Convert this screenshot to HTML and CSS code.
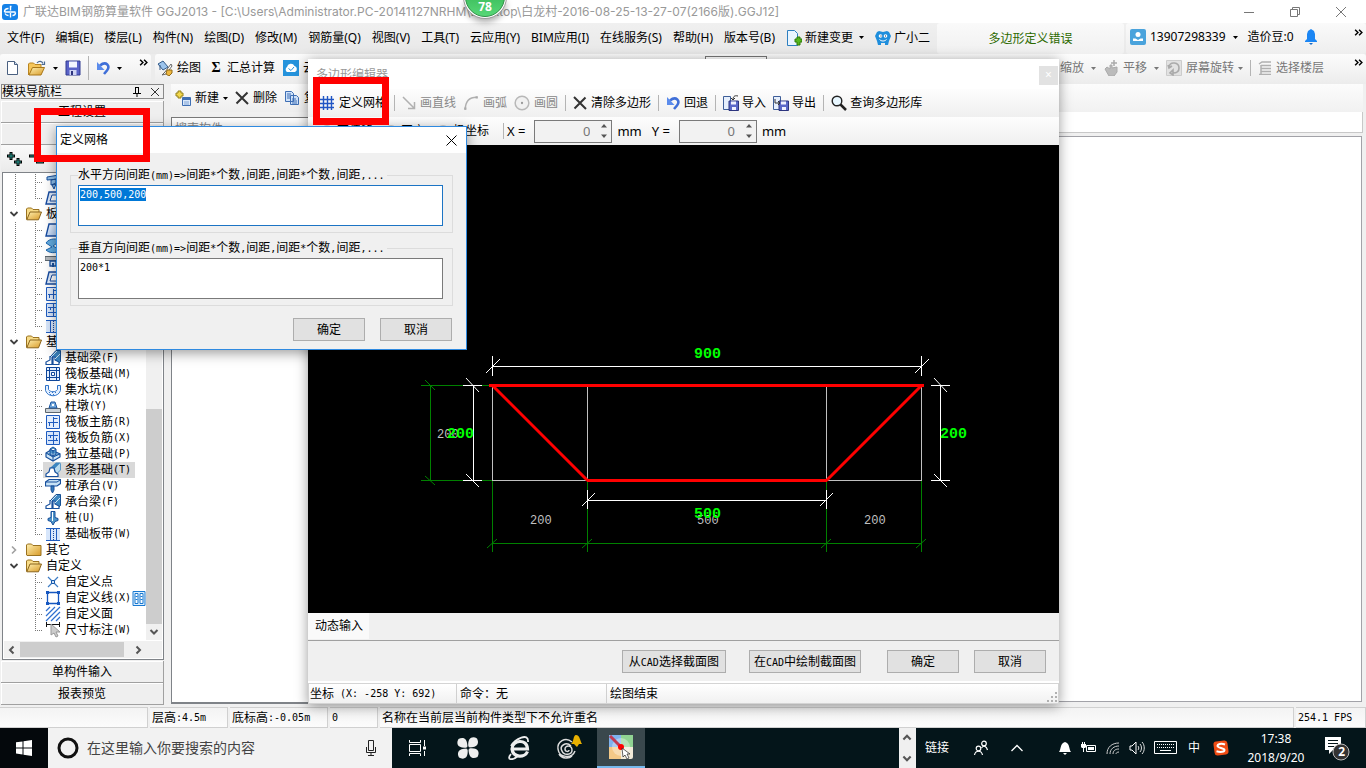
FILE: index.html
```html
<!DOCTYPE html>
<html lang="zh-CN">
<head>
<meta charset="utf-8">
<title>广联达BIM钢筋算量软件 GGJ2013</title>
<link rel="stylesheet" href="styles.css">
</head>
<body>
<svg class="defs" aria-hidden="true">
  <defs>
    <linearGradient id="gold" x1="0" y1="0" x2="1" y2="1"><stop offset="0" stop-color="#fff0b0"/><stop offset="1" stop-color="#d89a28"/></linearGradient>
    <linearGradient id="blue" x1="0" y1="0" x2="1" y2="1"><stop offset="0" stop-color="#f4f8ff"/><stop offset="1" stop-color="#9fc2f0"/></linearGradient>
    <linearGradient id="ball" x1="0" y1="0" x2="0" y2="1"><stop offset="0" stop-color="#27a845"/><stop offset="1" stop-color="#58d878"/></linearGradient>
    <symbol id="caret" viewBox="0 0 5 3"><path d="M0 0h5L2.500 3z" fill="currentColor"/></symbol>
    <symbol id="more" viewBox="0 0 8 6"><path d="M1 .5 3.500 3 1 5.500M4.500.5 7 3 4.500 5.500" fill="none" stroke="#000" stroke-width="1.300"/></symbol>
    <symbol id="undo" viewBox="0 0 14 14"><path d="M4 4.500C10-.5 15 5 11 9.500L8 13" fill="none" stroke="#3f6fd8" stroke-width="2.600"/><path d="M1 1v8h7.500z" fill="#5b8cec"/></symbol>
    <symbol id="cross" viewBox="0 0 14 14"><path d="M1 1l12 12M12.500 1.500 1.500 12.500" stroke="#333" stroke-width="2" fill="none"/></symbol>
    <symbol id="disk" viewBox="0 0 16 16"><path d="M1 1h14v14H1z" fill="#5a63c8" stroke="#303a90"/><path d="M4 1.500h8v6H4z" fill="#f3f5ff"/><path d="M4.500 10h7v5h-7z" fill="#cfd4f4"/><path d="M6 11h2v4H6z" fill="#2d347e"/></symbol>
    <symbol id="folder" viewBox="0 0 16 14"><path d="M.5 12V2l1-1h4l1.500 1.500h8V12.500H1z" fill="url(#gold)" stroke="#9a7220"/></symbol>
    <symbol id="folder-open" viewBox="0 0 16 14"><path d="M.5 12.500V2l1-1h4L7 2.500h6V5" fill="#f8dc88" stroke="#9a7220"/><path d="M.8 12.800 4 5h11.500l-3 7.800z" fill="url(#gold)" stroke="#8a641c"/></symbol>
    <symbol id="open-doc" viewBox="0 0 18 16"><path d="M.5 15V4l1-1h4L7 4.500h6V7" fill="#f6c65a" stroke="#b88420"/><path d="M1 15 4.500 7.500h12L13 15z" fill="url(#gold)" stroke="#a97718"/><path d="M9 3c2-2.500 5-2 6 .5M16.500 1.500v3h-3" fill="none" stroke="#496a94" stroke-width="1.200"/></symbol>
    <symbol id="chev-down" viewBox="0 0 10 10"><path d="M1.500 3 5 6.500 8.500 3" fill="none" stroke="#404040" stroke-width="1.800"/></symbol>
    <symbol id="chev-right" viewBox="0 0 10 10"><path d="M3 1.500 6.500 5 3 8.500" fill="none" stroke="#a0a0a0" stroke-width="1.600"/></symbol>
    <symbol id="branch" viewBox="0 0 40 16"><path d="M12.500 0v16M32.500 0v16M32 8.500h8" fill="none" stroke="#777" stroke-dasharray="1 1"/></symbol>
    <symbol id="branch-end" viewBox="0 0 40 16"><path d="M12.500 0v16M32.500 0v8M32 8.500h8" fill="none" stroke="#777" stroke-dasharray="1 1"/></symbol>
    <symbol id="twig" viewBox="0 0 40 16"><path d="M32.500 0v16M32 8.500h8" fill="none" stroke="#777" stroke-dasharray="1 1"/></symbol>
    <symbol id="twig-end" viewBox="0 0 40 16"><path d="M32.500 0v8M32 8.500h8" fill="none" stroke="#777" stroke-dasharray="1 1"/></symbol>
    <symbol id="t-screw" viewBox="0 0 16 16"><path d="M2 3l12-2v4L2 6zM6 6l5-1v4L6 11zM7 11l4-1-2 5z" fill="#8fc0ea" stroke="#174f9c"/></symbol>
    <symbol id="t-slab" viewBox="0 0 16 16"><path d="M4 2h11v12H1z" fill="url(#blue)" stroke="#164ba0" stroke-width="1.400"/></symbol>
    <symbol id="t-slabin" viewBox="0 0 16 16"><path d="M4 2h11v12H1z" fill="#dce9fa" stroke="#164ba0" stroke-width="1.400"/><path d="M7 5h8v6H5z" fill="#fff" stroke="#164ba0"/></symbol>
    <symbol id="t-spiral" viewBox="0 0 16 16"><path d="M1 5C4 0 13 0 15 3L8 8l7 4c-4 4-11 3-14 0l6-3z" fill="#63ace0" stroke="#1a65b0"/></symbol>
    <symbol id="t-post" viewBox="0 0 16 16"><path d="M0 2.500h16v4H0z" fill="#b4b8bc" stroke="#5c666e"/><path d="M5 7h6v5H5z" fill="#cfe2fa" stroke="#174f9c" stroke-width="1.300"/><path d="M7 9h2v4H7z" fill="#174f9c"/></symbol>
    <symbol id="t-beam" viewBox="0 0 16 16"><path d="M6 6 11 .5h4.500v11l-3 3z" fill="#3d86c0" stroke="#154f93"/><path d="M1 14.500V12l4-2V6.500h2V14.500zM8 14.500V7h2v3l4 2v2.500z" fill="#fff" stroke="#174f9c" stroke-width="1.200"/><path d="M6 7l6-6M10 9l5-5" stroke="#cfe6f6"/></symbol>
    <symbol id="t-strip" viewBox="0 0 16 16"><path d="M5 6 11 .5h4.500l-6 7z" fill="#3d86c0"/><path d="M9 7 15 1l.5 1v6l-4 4z" fill="#b9dbef" stroke="#5d9ac8"/><path d="M1 14.500V12l3-2 1-4h4l1 4 3 2v2.500z" fill="#fff" stroke="#174f9c" stroke-width="1.200"/></symbol>
    <symbol id="t-raft" viewBox="0 0 16 16"><path d="M1.500 1.500h13v13h-13zM4.500 1v14M11.500 1v14M1 4.500h14M1 11.500h14" fill="#e4effd" stroke="#0e469a"/><path d="M6.500 6.500h3v3h-3z" fill="#fff" stroke="#0e469a"/></symbol>
    <symbol id="t-pit" viewBox="0 0 16 16"><path d="M.5 3.500h3v4c2 3 7 3 9 0v-4h3v5c-2 7-13 7-15 0z" fill="#e3efff" stroke="#2d72c8"/><path d="M4 10.500h8M5 12.500h6" stroke="#2d72c8" stroke-dasharray="1 2"/></symbol>
    <symbol id="t-pier" viewBox="0 0 16 16"><path d="M.5 10.500h15v4H.5z" fill="#ccd3d9" stroke="#5c666e"/><path d="M4 10l2-6h4l2 6z" fill="#74a9dc" stroke="#1b559f"/><path d="M7 6h2v2H7z" fill="#fff"/></symbol>
    <symbol id="t-bar1" viewBox="0 0 16 16"><path d="M1.500 1.500h13v13h-13z" fill="#e3eefd" stroke="#1f5cc0"/><path d="M8.500 3v10M3 8.500h10M8.500 4.500h4M4.500 8v4" fill="none" stroke="#1f5cc0"/></symbol>
    <symbol id="t-bar2" viewBox="0 0 16 16"><path d="M1.500 1.500h13v13h-13z" fill="#d7e6fb" stroke="#1f5cc0"/><path d="M8.500 2v12M3 5.500h10M3 10.500h10M5.500 6v2M11.500 8v2" fill="none" stroke="#1f5cc0"/></symbol>
    <symbol id="t-iso" viewBox="0 0 16 16"><path d="M1 7l5-3 9 4v3l-7 4-7-4z" fill="#cde4f5" stroke="#174f9c" stroke-width="1.200"/><path d="M5 3l3-2 3 2v5l-3 2-3-2zM5 3l3 2 3-2M8 5v5M1 7l7 4 7-3M8 11v4" fill="#4d94c8" stroke="#174f9c"/></symbol>
    <symbol id="t-cap" viewBox="0 0 16 16"><path d="M.5 4 4 1.500h11.500v4L12 8H.5z" fill="#c6e1f5" stroke="#174f9c" stroke-width="1.200"/><path d="M1 4h11l3-2" stroke="#174f9c" fill="none"/><path d="M6 8h3v4l-1.500 3L6 12z" fill="#347bb9" stroke="#174f9c"/></symbol>
    <symbol id="t-pile" viewBox="0 0 16 16"><path d="M6 1.500h4v6l3 1v2l-3 1-2 3.500-2-3.500-3-1v-2l3-1z" fill="#4d94c8" stroke="#174f9c"/><path d="M7 2h1v9H7z" fill="#fff"/></symbol>
    <symbol id="t-band" viewBox="0 0 16 16"><path d="M1 3h14v11H1z" fill="#d7e6fb"/><path d="M1 14.500h14M5.500 2v12M11.500 2v12M1 2.500h14" stroke="#1f5cc0"/><path d="M8.500 3v11" stroke="#1647a0" stroke-dasharray="1 1"/></symbol>
    <symbol id="t-point" viewBox="0 0 16 16"><path d="M3 3l10 10M13 3 3 13" stroke="#3d7cc4" stroke-width="1.200"/><path d="M6.500 6.500h3v3h-3z" fill="#cfe2fa" stroke="#1657a8"/></symbol>
    <symbol id="t-line" viewBox="0 0 16 16"><path d="M2.500 2.500h11v11h-11z" fill="#fff" stroke="#1657c0" stroke-width="1.300"/><path d="M1 1h3v3H1zM12 1h3v3h-3zM1 12h3v3H1zM12 12h3v3h-3z" fill="#1657c0"/></symbol>
    <symbol id="t-area" viewBox="0 0 16 16"><path d="M1 5l4-4M1 10l9-9M1 15 15 1M6 15l9-9M11 15l4-4" stroke="#2f6fd0" stroke-width="1.200"/></symbol>
    <symbol id="t-dim" viewBox="0 0 16 16"><path d="M1.500 0v5M14.500 0v5M2 2.500h12" stroke="#111"/><path d="M6 2v11l3-2 2 4 2-1-2-4h4z" fill="#ccc" stroke="#999"/></symbol>
    <symbol id="save-out" viewBox="0 0 16 16"><path d="M.5 1.500h7v13h-7z" fill="#e6effc" stroke="#3e5e98"/><path d="M6 6h9.500v9.500H6z" fill="#5b68c8" stroke="#2d347e"/><path d="M8 6.500h5v3H8zM9 12h4v3H9z" fill="#f0f2ff"/></symbol>
  </defs>
</svg>

<div class="app">
  <header class="titlebar">
    <svg class="ic16" viewBox="0 0 16 16"><rect width="16" height="16" rx="3" fill="#1682e8"/><path d="M9.500 2.500H8.500v4M8.500 9v4.500M2.500 8h11M6.500 4.500c-3 0-4 2-4 3.500M6.500 11.500c-2 0-3-1-3.500-2M10.500 11.500c2 0 3-1 3-3" fill="none" stroke="#fff" stroke-width="1.400"/></svg>
    <h1>广联达BIM钢筋算量软件 GGJ2013 - [C:\Users\Administrator.PC-20141127NRHM\Desktop\白龙村-2016-08-25-13-27-07(2166版).GGJ12]</h1>
    <div class="win-controls">
      <button aria-label="最小化"><svg viewBox="0 0 10 10"><path d="M0 5.500h10" stroke="#777"/></svg></button>
      <button aria-label="还原"><svg viewBox="0 0 10 10"><path d="M.5 2.500h7v7h-7zM2.500 2V.5h7v7H8" fill="none" stroke="#777"/></svg></button>
      <button aria-label="关闭"><svg viewBox="0 0 10 10"><path d="M0 0l10 10M10 0 0 10" stroke="#777"/></svg></button>
    </div>
  </header>

  <nav class="menubar">
    <div class="menus">
      <button>文件(F)</button><button>编辑(E)</button><button>楼层(L)</button><button>构件(N)</button><button>绘图(D)</button><button>修改(M)</button><button>钢筋量(Q)</button><button>视图(V)</button><button>工具(T)</button><button>云应用(Y)</button><button>BIM应用(I)</button><button>在线服务(S)</button><button>帮助(H)</button><button>版本号(B)</button>
      <button class="tool tight"><svg class="ic16" viewBox="0 0 16 16"><path d="M1.500.5h7l3 3v12h-10z" fill="#e9f5ff" stroke="#2d7fc0"/><path d="M9 9h2V7h3v2h2v3h-2v3h-3v-3H9z" fill="#55b81c" stroke="#2f7a08"/></svg>新建变更<svg class="caret gap"><use href="#caret"/></svg></button>
      <button class="tool tight"><svg class="ic16" viewBox="0 0 16 16"><path d="M2 2 4 1l4 1 4-1 2 1 2 4-2 5-1 4h-3v-2H6v2H3l-1-4-2-5z" fill="#1f8edc"/><circle cx="5.500" cy="6" r="1.800" fill="#fff"/><circle cx="10.500" cy="6" r="1.800" fill="#fff"/><path d="M4.500 9.500c2 2 5 2 7 0" stroke="#fff" fill="none"/><path d="M5.500 5.500h1v1h-1zM10 5.500h1v1h-1z" fill="#124"/></svg>广小二</button>
    </div>
    <div class="notice">多边形定义错误</div>
    <div class="account">
      <button class="tool"><svg class="ic16" viewBox="0 0 16 16"><rect width="16" height="16" rx="2" fill="#4aa3dc"/><circle cx="8" cy="5.500" r="2.500" fill="#fff"/><path d="M3 12V9.500h2.500L8 11l2.500-1.500H13V12z" fill="#fff"/></svg>13907298339<svg class="caret gap"><use href="#caret"/></svg></button>
      <span>造价豆:0</span>
      <svg class="bell" viewBox="0 0 14 16"><path d="M7 0 10 2l1 3v5l2 2v1H1v-1l2-2V5l1-3z" fill="#1b86f4"/><path d="M5 14h4l-2 2z" fill="#1b6cc8"/></svg>
      <svg class="more"><use href="#more"/></svg>
    </div>
  </nav>

  <div class="toolbar">
    <div class="strip file-tools">
      <button aria-label="新建工程"><svg class="ic16" viewBox="0 0 16 16"><path d="M2.500 1.500h7l3 3v10h-10z" fill="#fff" stroke="#4a6080"/><path d="M9.500 1.500v3h3" fill="#cfe0f4" stroke="#4a6080"/></svg></button>
      <button aria-label="打开" class="tool"><svg class="ic18" viewBox="0 0 18 16"><use href="#open-doc"/></svg><svg class="caret gap"><use href="#caret"/></svg></button>
      <button aria-label="保存"><svg class="ic16"><use href="#disk"/></svg></button>
      <i class="sep tall"></i>
      <button aria-label="撤销" class="tool"><svg class="ic14"><use href="#undo"/></svg><svg class="caret gap"><use href="#caret"/></svg></button>
      <svg class="more"><use href="#more"/></svg>
    </div>
    <div class="strip draw-tools">
      <button class="tool"><svg class="ic16" viewBox="0 0 16 16"><path d="M1 4 6 1l5 6-5 3z" fill="#9cc4ec" stroke="#345a88"/><path d="M3 5v5" stroke="#345a88"/><path d="M14 4 8 12l-3 3 4-1 6-8z" fill="#fff" stroke="#666"/><path d="M10 10h5v3l-3 3-3-2z" fill="#efb840" stroke="#926a16"/></svg>绘图</button>
      <button class="tool"><span class="sigma">Σ</span>汇总计算</button>
      <button class="tool"><svg class="ic16" viewBox="0 0 16 16"><rect width="16" height="16" fill="#2593dc"/><path d="M4 12a3 3 0 0 1 0-5 4 4 0 0 1 7.500-1A3.200 3.200 0 0 1 12 12z" fill="#fff"/><path d="M5.500 8.500 8 10.500 11 7" stroke="#2593dc" fill="none"/></svg>云检查</button>
      <input class="floor" aria-label="楼层选择">
      <div class="view-tools">
        <button class="tool">缩放<svg class="caret gap"><use href="#caret"/></svg></button>
        <button class="tool"><svg class="ic16" viewBox="0 0 16 16"><path d="M2 9l2-2 3 2V5h2v3l5-1v5l-3 4H6z" fill="#bbb" stroke="#aaa"/><path d="M11 0v6M8 3h6" stroke="#aaa" stroke-width="1.500"/></svg>平移<svg class="caret gap"><use href="#caret"/></svg></button>
        <button class="tool"><svg class="ic16" viewBox="0 0 16 16"><path d="M.5.5h15v15H.5z" fill="#e2e2e2" stroke="#ccc"/><path d="M3 7C4 1 13 2 13 8c0 4-3 5-6 5M2 5l1 3 3-2M7 10v5l-3-2z" fill="none" stroke="#aaa" stroke-width="1.600"/></svg>屏幕旋转<svg class="caret"><use href="#caret"/></svg></button>
        <i class="sep"></i>
        <button class="tool"><svg class="ic14" viewBox="0 0 14 14"><path d="M1 3 4 1h9M3 4.500h10M3 7.500h10M3 10.500h10M1 13.500h12M3 4v9" fill="none" stroke="#b0b0b0" stroke-width="1.500"/></svg>选择楼层</button>
      </div>
      <svg class="more"><use href="#more"/></svg>
    </div>
  </div>

  <main class="work">
    <aside class="nav-panel">
      <div class="nav-head"><span>模块导航栏</span>
        <svg class="pin" viewBox="0 0 10 10"><path d="M3 .5h4M3.500 0v6M6.500 0v6M1 6.500h8M5 7v3" stroke="#000" fill="none"/></svg>
        <svg class="pin" viewBox="0 0 10 10"><path d="M1 1l8 8M9 1 1 9" stroke="#333"/></svg></div>
      <button class="nav-btn">工程设置</button>
      <button class="nav-btn"></button>
      <div class="tree-tools">
        <svg viewBox="0 0 18 16"><path d="M5 1v8M1 5h8M12 7v8M8 11h8" stroke="#000" stroke-width="3"/><path d="M5 2v6M2 5h6M12 8v6M9 11h6" stroke="#2a9a90"/></svg>
        <svg viewBox="0 0 18 16"><path d="M1 5h8M8 11h8" stroke="#000" stroke-width="3"/><path d="M2 5h6M9 11h6" stroke="#2a9a90"/></svg>
      </div>
      <div class="tree-box">
        <div class="tree-main">
          <ul class="tree">
            <li><svg class="br"><use href="#branch"/></svg><span><svg><use href="#t-screw"/></svg></span></li>
            <li><svg class="br"><use href="#branch-end"/></svg><span><svg><use href="#t-slabin"/></svg></span></li>
            <li class="top"><svg class="ch"><use href="#chev-down"/></svg><svg class="fo"><use href="#folder-open"/></svg>板</li>
            <li><svg class="br"><use href="#branch"/></svg><span><svg><use href="#t-slab"/></svg></span></li>
            <li><svg class="br"><use href="#branch"/></svg><span><svg><use href="#t-spiral"/></svg></span></li>
            <li><svg class="br"><use href="#branch"/></svg><span><svg><use href="#t-post"/></svg></span></li>
            <li><svg class="br"><use href="#branch"/></svg><span><svg><use href="#t-slabin"/></svg></span></li>
            <li><svg class="br"><use href="#branch"/></svg><span><svg><use href="#t-bar1"/></svg></span></li>
            <li><svg class="br"><use href="#branch"/></svg><span><svg><use href="#t-bar2"/></svg></span></li>
            <li><svg class="br"><use href="#branch-end"/></svg><span><svg><use href="#t-band"/></svg></span></li>
            <li class="top"><svg class="ch"><use href="#chev-down"/></svg><svg class="fo"><use href="#folder-open"/></svg>基础</li>
            <li><svg class="br"><use href="#branch"/></svg><span><svg><use href="#t-beam"/></svg>基础梁<b>(F)</b></span></li>
            <li><svg class="br"><use href="#branch"/></svg><span><svg><use href="#t-raft"/></svg>筏板基础<b>(M)</b></span></li>
            <li><svg class="br"><use href="#branch"/></svg><span><svg><use href="#t-pit"/></svg>集水坑<b>(K)</b></span></li>
            <li><svg class="br"><use href="#branch"/></svg><span><svg><use href="#t-pier"/></svg>柱墩<b>(Y)</b></span></li>
            <li><svg class="br"><use href="#branch"/></svg><span><svg><use href="#t-bar1"/></svg>筏板主筋<b>(R)</b></span></li>
            <li><svg class="br"><use href="#branch"/></svg><span><svg><use href="#t-bar2"/></svg>筏板负筋<b>(X)</b></span></li>
            <li><svg class="br"><use href="#branch"/></svg><span><svg><use href="#t-iso"/></svg>独立基础<b>(P)</b></span></li>
            <li><svg class="br"><use href="#branch"/></svg><span class="picked"><svg><use href="#t-strip"/></svg>条形基础<b>(T)</b></span></li>
            <li><svg class="br"><use href="#branch"/></svg><span><svg><use href="#t-cap"/></svg>桩承台<b>(V)</b></span></li>
            <li><svg class="br"><use href="#branch"/></svg><span><svg><use href="#t-beam"/></svg>承台梁<b>(F)</b></span></li>
            <li><svg class="br"><use href="#branch"/></svg><span><svg><use href="#t-pile"/></svg>桩<b>(U)</b></span></li>
            <li><svg class="br"><use href="#branch-end"/></svg><span><svg><use href="#t-band"/></svg>基础板带<b>(W)</b></span></li>
            <li class="top"><svg class="ch"><use href="#chev-right"/></svg><svg class="fo"><use href="#folder"/></svg>其它</li>
            <li class="top"><svg class="ch"><use href="#chev-down"/></svg><svg class="fo"><use href="#folder-open"/></svg>自定义</li>
            <li><svg class="br"><use href="#twig"/></svg><span><svg><use href="#t-point"/></svg>自定义点</span></li>
            <li><svg class="br"><use href="#twig"/></svg><span><svg><use href="#t-line"/></svg>自定义线<b>(X)</b></span><svg class="tag" viewBox="0 0 13 15"><path d="M.5.5h12v14H.5z" fill="#dcefff" stroke="#1878d0"/><path d="M2.500 2.500h3v10h-3zM7.500 2.500h3v10h-3z" fill="#fff" stroke="#1878d0"/><path d="M3 5.500h2M3 8.500h2M8 5.500h2M8 8.500h2" stroke="#1878d0"/></svg></li>
            <li><svg class="br"><use href="#twig"/></svg><span><svg><use href="#t-area"/></svg>自定义面</span></li>
            <li><svg class="br"><use href="#twig-end"/></svg><span><svg><use href="#t-dim"/></svg>尺寸标注<b>(W)</b></span></li>
          </ul>
          <div class="vscroll"><i></i><svg viewBox="0 0 10 10"><path d="M1.500 3 5 6.500 8.500 3" fill="none" stroke="#555" stroke-width="2"/></svg></div>
        </div>
        <div class="hscroll"><svg viewBox="0 0 10 10"><path d="M6.500 1.500 3 5l3.500 3.500" fill="none" stroke="#555" stroke-width="2"/></svg><i></i><svg viewBox="0 0 10 10"><path d="M3.500 1.500 7 5 3.500 8.500" fill="none" stroke="#555" stroke-width="2"/></svg></div>
      </div>
      <button class="nav-btn">单构件输入</button>
      <button class="nav-btn">报表预览</button>
    </aside>

    <section class="parts">
      <div class="parts-tools">
        <button class="tool"><svg class="ic16" viewBox="0 0 16 16"><path d="M3 1h3v2h2v3H6v2H3V6H1V3h2z" fill="#f3d84c" stroke="#93801c"/><path d="M7.500 7.500h8v8h-8z" fill="#dbe9fb" stroke="#3f6fb4"/><path d="M8 9h7" stroke="#3f6fb4" stroke-width="2"/><path d="M9 12h5M9 14h5" stroke="#7ea2d4"/></svg>新建<svg class="caret"><use href="#caret"/></svg></button>
        <button class="tool"><svg class="ic14"><use href="#cross"/></svg>删除</button>
        <button class="tool"><svg class="ic16" viewBox="0 0 16 16"><path d="M1.500 1.500h6l2 2v8h-8zM6.500 5.500h6l2 2v7h-8z" fill="#cfe2fa" stroke="#3f6fb4"/><path d="M3 4h4M3 6h3M3 8h3M8 9h4M8 11h5M8 13h5" stroke="#3f6fb4"/></svg>复制</button>
      </div>
      <input class="search" placeholder="搜索构件" aria-label="搜索构件">
      <div class="parts-list"></div>
    </section>

    <section class="stage">
      <div class="stage-tools"></div>
      <div class="stage-tabs"></div>
      <div class="stage-canvas"></div>
    </section>
  </main>

  <footer class="status">
    <span></span><span>层高<b>:4.5m</b></span><span>底标高<b>:-0.05m</b></span><span><b>0</b></span><span>名称在当前层当前构件类型下不允许重名</span><span><b>254.1 FPS</b></span>
  </footer>

  <footer class="taskbar">
    <button class="start" aria-label="开始"><svg viewBox="0 0 16 16"><path d="M0 2.300 6.500 1.400v6H0zM7.500 1.200 16 0v7.400H7.500zM0 8.500h6.500v6L0 13.600zM7.500 8.500H16V16l-8.500-1.200z" fill="#fff"/></svg></button>
    <label class="cortana">
      <svg class="ring" viewBox="0 0 22 22"><circle cx="11" cy="11" r="9" fill="none" stroke="#111" stroke-width="3"/></svg>
      <input placeholder="在这里输入你要搜索的内容" aria-label="搜索">
      <svg class="ic16" viewBox="0 0 16 16"><path d="M5.500 .5h5v10h-5zM3.500 7v5.500h9V7M8 13v2.500M5 15.500h6" fill="none" stroke="#222"/></svg>
    </label>
    <div class="apps">
      <button aria-label="任务视图"><svg viewBox="0 0 24 24"><path d="M4.500 8.500h11v7h-11zM4.500 4v2.500h11V4M4.500 20v-2.500h11V20M19.500 4v6M19.500 15v5" fill="none" stroke="#fff"/><path d="M18 10.500h3v3h-3z" fill="#fff"/></svg></button>
      <button aria-label="风车"><svg viewBox="0 0 24 24"><path d="M11.500 11.500C1 13 0 7 2.500 3c4-2 9-2 9 8.500zM12.500 11.500C11 1 17 0 21 2.500c2 4 2 9-8.500 9zM12.500 12.500C23 11 24 17 21.500 21c-4 2-9 2-9-8.500zM11.500 12.500C13 23 7 24 3 21.500c-2-4-2-9 8.500-9z" fill="#eee"/><circle cx="12" cy="12" r="1.500" fill="#04151a"/></svg></button>
      <button aria-label="浏览器"><svg viewBox="0 0 24 24"><path d="M20.500 15.500C18 22 6 22 5 13 5 4 20 2 20.500 13H6" fill="none" stroke="#eee" stroke-width="3.200"/><path d="M4 18C-1 24 5 25 11 20M4 10C8 3 22-4 21 6" fill="none" stroke="#eee" stroke-width="1.800"/></svg></button>
      <button aria-label="提醒"><svg viewBox="0 0 32 32"><g fill="none" stroke="#ddd" stroke-width="1.500"><path d="M18 10C11 4 3 10 4 17c1 9 14 10 17 2M17 14c-5-5-12 0-9 5 2 5 10 4 10-1 0-5-7-5-7-1 0 3 4 3 4 1M5 22c3 5 10 5 13 2"/></g><path d="M17 12c3-2 2-9 5-9 4 0 4 6 6 9zM20 12h5l-2 3z" fill="#e8b000"/></svg></button>
      <button class="active" aria-label="算量软件"><svg viewBox="0 0 24 24"><rect width="24" height="24" rx="2" fill="#f2ead8"/><path d="M0 0h12v12H0z" fill="#7fb2ee"/><path d="M12 0h12v12H12z" fill="#90d292"/><path d="M0 12h12v12H0z" fill="#f4c987"/><circle cx="12" cy="12" r="9" fill="#fff" opacity=".35"/><path d="M1 1l11 11" stroke="#c23a52" stroke-width="3"/><circle cx="12" cy="12" r="3" fill="#f00"/><path d="M13 13l1 9 2-2 2 4 2-1-2-4h3z" fill="#fff" stroke="#222" stroke-width=".7"/></svg></button>
    </div>
    <div class="band-scroll"><svg viewBox="0 0 10 10"><path d="M2 7 5 4l3 3" fill="none" stroke="#555" stroke-width="1.800"/></svg><svg viewBox="0 0 10 10"><path d="M2 3l3 3 3-3" fill="none" stroke="#555" stroke-width="1.800"/></svg></div>
    <a class="links" href="#links">链接</a>
    <div class="tray">
      <svg viewBox="0 0 16 16"><g fill="none" stroke="#fff" stroke-width="1.200"><circle cx="5.500" cy="8.500" r="2.300"/><path d="M1.500 15c1-5 7-5 8 0"/><circle cx="11" cy="3.500" r="2.300"/><path d="M8.500 8c2-3 5-2 6 2"/></g></svg>
      <svg viewBox="0 0 16 16"><path d="M2.500 11 8 5.500 13.500 11" fill="none" stroke="#fff" stroke-width="1.300"/></svg>
    </div>
    <div class="tray small">
      <svg viewBox="0 0 16 16"><path d="M2 12c2-2 1-9 6-10 5 1 4 8 6 10zM6 13h4l-2 2z" fill="#fff"/></svg>
      <svg viewBox="0 0 16 16"><path d="M5.500 5.500h9v6h-9z" fill="none" stroke="#fff"/><path d="M7 7h6v3H7zM0 4h5v3L4 8H1L0 7zM1 2h1v2H1zM3 2h1v2H3zM2 8h1v4H2z" fill="#fff"/></svg>
      <svg viewBox="0 0 16 16"><g fill="none" stroke="#ccc"><path d="M2 14C2 7 7 3 14 3M5 14c0-5 4-8 9-8M8 14c0-3 2-5 6-5M11 14c0-1 1-2 3-2"/></g></svg>
      <svg viewBox="0 0 16 16"><path d="M1 6h2l4-4v12l-4-4H1z" fill="none" stroke="#fff"/><path d="M9 6c1 1 1 3 0 4M11 4c2 2 2 6 0 8M13 2c3 3 3 9 0 12" fill="none" stroke="#ddd"/></svg>
    </div>
    <svg class="keyb" viewBox="0 0 24 14"><path d="M.5.5h22v12H.5z" fill="none" stroke="#fff"/><path d="M3 3.500h17M3 6.500h17" stroke="#fff" stroke-dasharray="1 1"/><path d="M6 9.500h11" stroke="#fff"/></svg>
    <span class="ime">中</span>
    <svg class="sogou" viewBox="0 0 16 16"><rect x="1" y="1" width="14" height="14" rx="3" fill="#f04c14" transform="rotate(-8 8 8)"/><path d="M12 4.500C8 3 4.500 4 4.500 6s7 2 7 4-4 2.500-8 1.300" fill="none" stroke="#fff" stroke-width="2"/></svg>
    <time class="clock">17:38<br>2018/9/20</time>
    <button class="center" aria-label="通知"><svg viewBox="0 0 26 26"><path d="M1 2h16v13H9l-4 4v-4H1z" fill="#fff"/><path d="M4 5.500h10M4 8.500h10M4 11.500h6" stroke="#04151a"/><circle cx="17" cy="17" r="8" fill="#333" stroke="#bbb"/></svg><em>2</em></button>
  </footer>
</div>

<div class="ballwrap" aria-label="加速球"><svg viewBox="0 0 48 28"><circle cx="24" cy="-3" r="21.500" fill="#fff" stroke="#999"/><circle cx="24" cy="-3" r="19.500" fill="url(#ball)" stroke="#2e8f46"/></svg><strong>78</strong></div>

<section class="editor" aria-label="多边形编辑器">
  <div class="ed-title"><span>多边形编辑器</span><button aria-label="关闭编辑器">×</button></div>
  <div class="ed-bar">
    <i class="grip"></i>
    <button class="tool"><svg class="ic16" viewBox="0 0 16 16"><path d="M4.500 1v14M8.500 1v14M12.500 1v14M1 4.500h14M1 8.500h14M1 12.500h14" stroke="#1f55c4" stroke-width="1.400"/></svg>定义网格</button>
    <i class="sep"></i>
    <button class="tool off" disabled><svg class="ic14" viewBox="0 0 14 14"><path d="M1 1l11 11M12.500 6v6.500H6" fill="none" stroke="#b0b0b0" stroke-width="1.500"/></svg>画直线</button>
    <button class="tool off" disabled><svg class="ic16" viewBox="0 0 14 14"><path d="M2 13C2 6 5 2 12 2" fill="none" stroke="#b0b0b0" stroke-width="1.300"/><path d="M11 1h2v2h-2zM1 11h2v2H1z" fill="#aaa"/></svg>画弧</button>
    <button class="tool off" disabled><svg class="ic16" viewBox="0 0 14 14"><circle cx="7" cy="7" r="6" fill="#f1f1f1" stroke="#b8b8b8" stroke-width="1.300"/><circle cx="7" cy="7" r="1" fill="#999"/></svg>画圆</button>
    <i class="sep"></i>
    <button class="tool"><svg class="ic14"><use href="#cross"/></svg>清除多边形</button>
    <i class="sep"></i>
    <button class="tool"><svg class="ic14"><use href="#undo"/></svg>回退</button>
    <i class="sep"></i>
    <button class="tool tight"><svg class="ic16" viewBox="0 0 16 16"><use href="#save-out"/><path d="M15 1c-4-1-5 1-5 4M8 3l2 2 2-2" fill="none" stroke="#333"/></svg>导入</button>
    <button class="tool tight"><svg class="ic16" viewBox="0 0 16 16"><use href="#save-out"/><path d="M2 4v4h4M5 6l2 2-2 2" fill="none" stroke="#333"/></svg>导出</button>
    <i class="sep"></i>
    <button class="tool tight"><svg class="ic16" viewBox="0 0 16 16"><circle cx="6" cy="6" r="4.800" fill="#e8f7ff" stroke="#222" stroke-width="1.400"/><path d="M9.500 9.500 15 15" stroke="#222" stroke-width="2.500"/></svg>查询多边形库</button>
  </div>
  <div class="ed-bar second">
    <i class="grip"></i>
    <div class="modes">
      <label><input type="radio" name="m" disabled>不偏移</label>
      <label><input type="radio" name="m" disabled>正交</label>
      <label><input type="radio" name="m" disabled>极坐标</label>
    </div>
    <i class="sep"></i>
    <label class="coord">X = <span class="spin"><input value="0"><svg viewBox="0 0 8 18"><path d="M1 5.500h6L4 2zM1 12.500h6L4 16z" fill="#555"/></svg></span> mm</label>
    <label class="coord">Y = <span class="spin"><input value="0"><svg viewBox="0 0 8 18"><path d="M1 5.500h6L4 2zM1 12.500h6L4 16z" fill="#555"/></svg></span> mm</label>
  </div>
  <svg class="drawing" viewBox="308 145 751 468">
    <g shape-rendering="crispEdges" fill="none" stroke="#c0c0c0"><path d="M492.500 385v95.500h429V385M587.500 385v95M826.500 385v95"/></g>
    <g shape-rendering="crispEdges" fill="none" stroke="#008000"><path d="M421 385.500h71M421 480.500h71M430.500 385v96M492.500 481v71M587.500 481v71M826.500 481v71M921.500 481v71M492 543.500h430"/></g>
    <g fill="none" stroke="#008000"><path d="M425 380l10 10M425 476l10 9M487 548l10-9M582 548l10-9M821 548l10-9M916 548l10-9"/></g>
    <text class="grey" x="437" y="438">200</text>
    <g shape-rendering="crispEdges" fill="none" stroke="#fff"><path d="M492.500 356v20M921.500 356v20M492 366.500h430M463 385.500h19M463 480.500h19M473.500 385v96M931 385.500h19M931 480.500h19M940.500 385v96M587.500 490v19M826.500 490v19M587 500.500h240"/></g>
    <g fill="none" stroke="#fff"><path d="M486 373l14-14M915 373l14-14M466 378l13 14M466 474l13 13M934 378l13 14M934 474l13 13M582 506l13-13M820 506l13-13"/></g>
    <g fill="none" stroke="#f00" stroke-width="3"><path d="M489 385.500h435M587 480.500h240M492.500 385.500l95 95M921.500 385.500l-95 95"/></g>
    <text class="grey" x="530" y="524">200</text><text class="grey" x="697" y="524">500</text><text class="grey" x="864" y="524">200</text>
    <text class="green" x="694" y="358">900</text><text class="green" x="694" y="518">500</text><text class="green" x="447" y="438">200</text><text class="green" x="940" y="438">200</text>
  </svg>
  <div class="ed-tabs"><button>动态输入</button></div>
  <div class="ed-actions"><button class="btn auto">从<b>CAD</b>选择截面图</button><button class="btn auto next">在<b>CAD</b>中绘制截面图</button><button class="btn">确定</button><button class="btn">取消</button></div>
  <div class="ed-status"><span>坐标<b> (X: -258 Y: 692)</b></span><span>命令：无</span><span>绘图结束</span>
    <svg viewBox="0 0 10 10"><path d="M8 0h2v2H8zM4 4h2v2H4zM8 4h2v2H8zM0 8h2v2H0zM4 8h2v2H4zM8 8h2v2H8z" fill="#b0b0b0"/></svg></div>
</section>

<section class="dialog" role="dialog" aria-label="定义网格">
  <div class="dl-title"><span>定义网格</span><button aria-label="关闭"><svg viewBox="0 0 11 11"><path d="M.5.5l10 10M10.500.5l-10 10" stroke="#000"/></svg></button></div>
  <form class="dl-body">
    <fieldset><legend><label for="hgap">水平方向间距<b>(mm)=&gt;</b>间距<b>*</b>个数<b>,</b>间距<b>,</b>间距<b>*</b>个数<b>,</b>间距<b>,...</b></label></legend><textarea id="hgap" class="hot" spellcheck="false">200,500,200</textarea></fieldset>
    <fieldset><legend><label for="vgap">垂直方向间距<b>(mm)=&gt;</b>间距<b>*</b>个数<b>,</b>间距<b>,</b>间距<b>*</b>个数<b>,</b>间距<b>,...</b></label></legend><textarea id="vgap" spellcheck="false">200*1</textarea></fieldset>
    <div class="dl-actions"><button type="button" class="btn">确定</button><button type="button" class="btn">取消</button></div>
  </form>
</section>

<div class="mark mark-a"></div>
<div class="mark mark-b"></div>
<script src="main.js"></script>
</body>
</html>
```
FILE: styles.css
```css
* { box-sizing: border-box; }
body { margin: 0; overflow: hidden; color: #000; font: 12px/16px "Noto Sans", "Noto Sans CJK SC", sans-serif; }
button, input, textarea { font: inherit; color: inherit; }
button { padding: 0; border: 0; background: none; white-space: nowrap; }
svg { display: block; flex: none; }
b { font: 10px/12px "DejaVu Sans Mono", monospace; white-space: pre; }
.defs { position: absolute; width: 0; height: 0; }

.app { display: flex; flex-direction: column; height: 100vh; background: #f0f0f0; }
.ic14 { width: 14px; height: 14px; }
.ic16 { width: 16px; height: 16px; }
.ic18 { width: 18px; height: 16px; }
.caret { width: 5px; height: 3px; }
.caret.gap { margin-left: 3px; }
.more { width: 9px; height: 7px; }
.tool { display: flex; align-items: center; gap: 4px; }
.tool.tight { gap: 3px; }
.sep { flex: none; width: 1px; height: 16px; background: #b4b4b4; }
.sep.tall { height: 24px; }

.titlebar { display: flex; align-items: center; gap: 5px; height: 23px; flex: none; padding-left: 2px; background: #fff; }
.titlebar h1 { margin: 0; font: 12px/16px Inter, "Noto Sans CJK SC", sans-serif; color: #999; white-space: nowrap; }
.win-controls { display: flex; gap: 36px; margin-left: auto; padding-right: 20px; }
.win-controls svg { width: 10px; height: 10px; }

.menubar { display: flex; height: 31px; flex: none; background: linear-gradient(#f0f0f0, #e8e8e8); }
.menus { display: flex; align-items: center; gap: 11px; width: 937px; padding: 0 0 2px 7px; }
.notice { display: flex; align-items: center; justify-content: center; width: 187px; margin-right: 2px; border-radius: 3px; color: #2d6a00; background: linear-gradient(#fafafa, #f0f0f0); }
.account { display: flex; flex: 1; align-items: center; gap: 10px; padding: 0 3px 3px 4px; border-radius: 3px; background: linear-gradient(#fafafa, #eee); }
.account .more { margin-left: auto; align-self: flex-start; margin-top: 6px; }
.bell { width: 14px; height: 16px; }

.toolbar { display: flex; gap: 4px; height: 30px; flex: none; background: #ececec; }
.strip { display: flex; align-items: center; background: linear-gradient(#fcfcfc, #ececec); border-radius: 3px; }
.strip .more { align-self: flex-start; margin-top: 5px; }
.file-tools { width: 151px; padding: 0 3px 2px 5px; gap: 7px; }
.file-tools .more { margin-left: auto; }
.draw-tools { flex: 1; padding: 0 3px 2px 2px; gap: 8px; }
.sigma { width: 14px; font: bold 14px/16px "Liberation Serif", serif; }
.floor { align-self: flex-start; width: 62px; height: 24px; margin: 2px 0 0 358px; border: 1px solid #777; background: #fff; }
.view-tools { display: flex; align-items: center; gap: 7px; margin-left: auto; padding-right: 22px; color: #777; }

.work { display: flex; flex: 1; min-height: 0; gap: 6px; }
.nav-panel { display: flex; flex-direction: column; width: 165px; flex: none; padding: 0 1px 2px; background: #f0f0f0; }
.nav-head { display: flex; align-items: center; gap: 8px; height: 15px; flex: none; margin-bottom: 2px; padding-right: 3px; border: 1px solid #888; line-height: 13px; }
.nav-head span { flex: 1; }
.pin { width: 10px; height: 10px; }
.nav-btn { height: 22px; flex: none; border: solid #a0a0a0; border-width: 0 1px 1px 0; box-shadow: inset 1px 1px #fff; background: #efefef; }
.tree-tools { display: flex; gap: 4px; height: 27px; flex: none; padding: 6px 5px 5px; background: linear-gradient(#fafafa, #eaeaea); }
.tree-tools svg { width: 18px; height: 16px; }
.tree-box { display: flex; flex-direction: column; flex: 1; min-height: 0; margin: 0 0 1px 1px; border: 1px solid #7f8388; background: #fff; }
.tree-main { display: flex; flex: 1; min-height: 0; }
.tree { flex: 1; min-width: 0; margin: 0; padding: 1px 0 0; list-style: none; overflow: hidden; }
.tree li { display: flex; align-items: center; height: 16px; white-space: nowrap; }
.tree li > span { display: flex; align-items: center; height: 16px; padding: 0 4px 0 2px; }
.tree li > span svg { width: 16px; height: 16px; margin-right: 4px; }
.tree .br { width: 40px; height: 16px; }
.tree .ch { width: 10px; height: 10px; margin: 0 7px 0 6px; }
.tree .fo { width: 16px; height: 14px; margin-right: 4px; }
.tree .tag { width: 14px; height: 15px; margin-left: -3px; }
.tree .picked { background: #d9d9d9; }
.vscroll { display: flex; flex-direction: column; align-items: center; justify-content: flex-end; width: 16px; margin-right: 1px; background: #f0f0f0; }
.vscroll i { width: 16px; height: 46%; background: #cdcdcd; }
.vscroll svg, .hscroll svg { width: 10px; height: 10px; margin: 3px; }
.hscroll { display: flex; align-items: center; height: 17px; flex: none; margin: 1px; padding-right: 16px; background: #f0f0f0; }
.hscroll i { height: 15px; flex: 1; margin-right: 6px; background: #cdcdcd; }

.parts { display: flex; flex-direction: column; width: 184px; flex: none; padding-bottom: 3px; }
.parts-tools { display: flex; align-items: center; gap: 7px; height: 28px; flex: none; padding-left: 4px; overflow: hidden; background: linear-gradient(#fbfbfb, #eee); }
.search { height: 22px; flex: none; margin: 5px 0 3px; padding: 0 3px; border: 1px solid #7a7a7a; background: #fff; }
.search::placeholder { color: #888; }
.parts-list { flex: 1; border: solid #7f8388; border-width: 1px 1px 2px; background: #fff; }
.stage { display: flex; flex-direction: column; flex: 1; padding: 0 3px 3px 0; }
.stage-tools { height: 28px; background: linear-gradient(#fcfcfc, #f1f1f1); }
.stage-tabs { height: 21px; border: solid #c8c8c8; border-width: 0 1px 1px 0; background: #fff; }
.stage-canvas { flex: 1; margin: 3px 1px 2px 0; border: 1px solid #a2a2a8; background: #fff; }

.status { display: flex; gap: 2px; height: 21px; flex: none; }
.status span { display: flex; align-items: center; padding-left: 2px; border: solid #d0d0d0; border-width: 1px 1px 1px 0; background: linear-gradient(#f3f3f3, #fcfcfc); white-space: nowrap; }
.status span:nth-child(1) { width: 148px; }
.status span:nth-child(2) { width: 78px; }
.status span:nth-child(3) { width: 98px; }
.status span:nth-child(4) { width: 48px; }
.status span:nth-child(5) { flex: 1; }
.status span:nth-child(6) { width: 70px; }

.taskbar { display: flex; align-items: center; height: 40px; flex: none; background: #04151a; color: #fff; }
.start { display: flex; align-items: center; justify-content: center; width: 48px; height: 40px; background: #04080c; }
.start svg { width: 16px; height: 16px; }
.cortana { display: flex; align-items: center; width: 344px; height: 40px; padding: 0 13px 0 9px; background: #f2f2f2; }
.cortana .ring { width: 22px; height: 22px; }
.cortana input { flex: 1; min-width: 0; padding: 0 0 0 8px; border: 0; background: none; font-size: 14px; color: #444; }
.cortana input::placeholder { color: #444; }
.apps { display: flex; flex: 1; gap: 3px; padding-left: 1px; }
.apps button { display: flex; align-items: center; justify-content: center; width: 48px; height: 40px; }
.apps svg { width: 24px; height: 24px; }
.apps button:nth-child(4) svg { width: 32px; height: 32px; }
.apps .active { border-bottom: 2px solid #76b9ed; background: #3a484d; }
.band-scroll { display: flex; flex-direction: column; align-items: center; justify-content: space-between; width: 17px; height: 40px; padding: 3px 0; background: #f0f0f0; }
.band-scroll svg { width: 12px; height: 12px; }
.links { margin: 0 24px 0 9px; color: #fff; text-decoration: none; }
.tray { display: flex; gap: 20px; }
.tray.small { gap: 8px; margin: 0 9px 0 32px; }
.tray svg { width: 16px; height: 16px; }
.keyb { width: 24px; height: 14px; }
.ime { margin: 0 13px 0 10px; }
.sogou { width: 16px; height: 16px; }
.clock { width: 72px; margin: 0 12px 0 11px; text-align: center; line-height: 19px; }
.center { position: relative; width: 26px; height: 26px; margin-right: 16px; }
.center svg { width: 26px; height: 26px; }
.center em { position: absolute; right: 5px; bottom: 1px; font: bold 12px/16px "Noto Sans", sans-serif; }

.ballwrap { position: absolute; left: 461px; top: 0; width: 48px; height: 28px; }
.ballwrap svg { position: absolute; width: 48px; height: 28px; filter: drop-shadow(0 3px 3px #0005); }
.ballwrap strong { position: relative; display: block; text-align: center; line-height: 13px; font-size: 12px; color: #fff; }

.editor { position: absolute; left: 308px; top: 59px; width: 751px; display: flex; flex-direction: column; background: #f0f0f0; box-shadow: 0 2px 12px #0006; }
.ed-title { display: flex; align-items: center; justify-content: space-between; height: 30px; padding: 2px 1px 0 8px; background: #fff; color: #999; }
.ed-title button { width: 19px; height: 19px; background: #e2e2e2; color: #fff; line-height: 16px; }
.ed-bar { display: flex; align-items: center; gap: 7px; height: 28px; padding: 0 5px; background: linear-gradient(#fdfdfd, #efefef); }
.ed-bar .off { color: #888; }
.grip { width: 2px; height: 16px; margin-right: -3px; background: repeating-linear-gradient(#bbb 0 2px, #fff 2px 4px); }
.ed-bar.second { gap: 3px; }
.modes { display: flex; gap: 12px; width: 185px; padding-left: 6px; }
.modes label { display: flex; align-items: center; white-space: nowrap; }
.modes input { width: 12px; height: 12px; margin: 0 4px 0 0; }
.coord { display: flex; align-items: center; gap: 5px; margin-right: 7px; font-size: 13px; white-space: nowrap; }
.spin { display: flex; align-items: center; width: 78px; height: 23px; margin-left: 4px; padding-right: 3px; border: 1px solid #7a7a7a; background: #f2f2f2; }
.spin input { width: 62px; flex: 1; min-width: 0; padding: 0 10px 0 0; border: 0; background: none; color: #777; text-align: right; }
.spin svg { width: 8px; height: 18px; }
.drawing { width: 100%; height: auto; background: #000; }
.grey { font: 12px "Liberation Mono", monospace; fill: #c0c0c0; }
.green { font: bold 15px "Liberation Mono", monospace; fill: #0f0; }
.ed-tabs { height: 28px; border-bottom: 1px solid #a0a0a0; }
.ed-tabs button { height: 26px; padding: 0 6px 0 7px; background: #fafafa; }
.ed-actions { display: flex; justify-content: flex-end; gap: 15px; padding: 9px 13px 8px; border-bottom: 2px solid #fff; }
.btn { width: 72px; height: 23px; border: 1px solid #adadad; background: #e1e1e1; }
.btn.auto { width: auto; padding: 0 6px; margin-right: 8px; }
.btn.next { padding: 0 4px; margin-right: 11px; }
.ed-status { display: flex; gap: 2px; height: 21px; background: linear-gradient(#fff, #f1f1f1); border: 1px solid #d4d4d4; }
.ed-status span { display: flex; align-items: center; width: 148px; padding-left: 1px; border-right: 1px solid #d0d0d0; white-space: nowrap; }
.ed-status span:nth-child(3) { flex: 1; border: 0; }
.ed-status svg { width: 10px; height: 10px; align-self: flex-end; margin: 0 1px 1px 0; }

.dialog { position: absolute; left: 56px; top: 126px; width: 411px; border: 1px solid #2f8ae0; background: #f0f0f0; box-shadow: 0 3px 12px #0006; }
.dl-title { display: flex; align-items: center; justify-content: space-between; height: 26px; padding: 0 9px 0 3px; background: #fff; }
.dl-title svg { width: 11px; height: 11px; }
.dl-body { padding: 14px 13px 8px; }
fieldset { min-width: 0; margin: 0 0 7px; padding: 2px 9px 6px 7px; border: 1px solid #dcdcdc; }
legend { height: 16px; padding: 0 3px 0 0; white-space: nowrap; }
textarea { display: block; width: 100%; height: 41px; margin: 0; padding: 2px 1px; border: 1px solid #7a7a7a; outline: 0; resize: none; font: 10px/13px "DejaVu Sans Mono", monospace; background: #fff; }
textarea.hot { border-color: #1c74c4; }
textarea::selection { background: #0078d7; color: #fff; }
.dl-actions { display: flex; justify-content: flex-end; gap: 15px; margin-top: 12px; padding-right: 1px; }

.mark { position: absolute; border: 7px solid #f00; pointer-events: none; }
.mark-a { left: 313px; top: 77px; width: 76px; height: 48px; }
.mark-b { left: 34px; top: 108px; width: 116px; height: 54px; }
```
FILE: main.js
```js
var field = document.getElementById('hgap');
field.focus({ preventScroll: true });
field.select();
```
